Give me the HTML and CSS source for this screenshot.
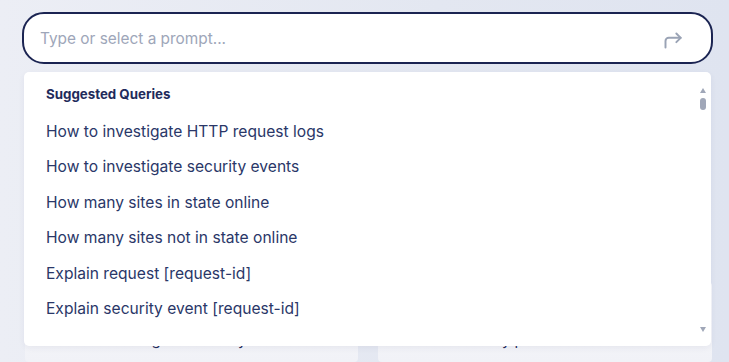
FILE: index.html
```html
<!DOCTYPE html>
<html lang="en">
<head>
  <meta charset="UTF-8" />
  <meta name="viewport" content="width=device-width, initial-scale=1" />
  <title>Assistant Prompt</title>
  <link rel="stylesheet" href="styles.css">
</head>
<body>

<div class="page">
  <div class="search">
    <input type="text" class="search-input" placeholder="Type or select a prompt..." />
    <button class="send-btn" aria-label="Send">
      <svg width="26" height="26" viewBox="0 0 24 24" fill="none" stroke="currentColor" stroke-width="1.8" stroke-linecap="round" stroke-linejoin="round">
        <path d="M6 19v-6a3 3 0 0 1 3 -3h11" />
        <path d="M16 6l4 4l-4 4" />
      </svg>
    </button>
  </div>

  <div class="panel">
    <div class="cards">
      <div class="card">
        <p class="card-title">Show recent large attacks by site</p>
      </div>
      <div class="card">
        <p class="card-title">Show attacks by path</p>
      </div>
    </div>

    <!-- Suggestions dropdown -->
    <div class="dropdown">
      <div class="dropdown-list">
        <h4 class="dropdown-title">Suggested Queries</h4>
        <ul class="queries">
          <li>How to investigate HTTP request logs</li>
          <li>How to investigate security events</li>
          <li>How many sites in state online</li>
          <li>How many sites not in state online</li>
          <li>Explain request [request-id]</li>
          <li>Explain security event [request-id]</li>
        </ul>
      </div>
      <div class="scrollbar">
        <span class="arrow-up"></span>
        <span class="thumb"></span>
        <span class="track"></span>
        <span class="arrow-down"></span>
      </div>
    </div>
  </div>
</div>

</body>
</html>
```

FILE: styles.css
```css
/* Page */
body {
  margin: 0;
  font-family: 'Inter', 'Noto Sans', sans-serif;
  background: linear-gradient(90deg, #eceef5, #e3e7f1 60%, #dfe4f0);
  height: 362px;
  overflow: hidden;
}

.page {
  padding: 12px 16px 0 22px;
}

/* Prompt input */
.search {
  display: flex;
  align-items: center;
  height: 52px;
  box-sizing: border-box;
  width: 691px;
  border: 2px solid #1b2452;
  border-radius: 22px;
  background: #ffffff;
  padding: 0 16px;
}

.search-input {
  flex: 1;
  border: none;
  outline: none;
  background: transparent;
  font-family: inherit;
  font-size: 15.4px;
  color: #1f2b5b;
  padding: 0;
}

.search-input::placeholder {
  color: #9ea6b9;
}

.send-btn {
  border: none;
  background: none;
  padding: 0;
  margin: 3px 10px 0 0;
  color: #9aa3b5;
  display: flex;
}

/* Dropdown + cards behind */
.panel {
  position: relative;
  margin-top: 8px;
}

.cards {
  display: grid;
  grid-template-columns: 333px 334px;
  gap: 20px;
  margin: 0 2px 0 3px;
  padding-top: 210px;
}

.card {
  background: linear-gradient(180deg, #f6f7fa, #f1f2f7);
  border-radius: 4px;
  height: 80px;
  padding: 48px 16px 0;
  box-sizing: border-box;
}

.card-title {
  margin: 0;
  font-size: 15px;
  line-height: 20px;
  color: #1f2b5b;
}

.dropdown {
  position: absolute;
  top: 0;
  left: 2px;
  width: 687px;
  height: 274px;
  display: flex;
  background: #ffffff;
  border-radius: 5px;
  box-shadow: 0 2px 6px rgba(30, 40, 90, 0.06);
}

.dropdown-list {
  flex: 1;
  padding: 14px 0 0 22px;
}

.dropdown-title {
  margin: 0 0 12px;
  font-size: 13.3px;
  line-height: 16px;
  font-weight: 700;
  color: #1f2b5b;
}

.queries {
  list-style: none;
  margin: 0;
  padding: 0;
}

.queries li {
  font-size: 15.6px;
  line-height: 19.4px;
  padding: 8px 0;
  color: #2a3768;
}

/* Fake scrollbar */
.scrollbar {
  width: 12px;
  display: flex;
  flex-direction: column;
  align-items: center;
  padding: 16px 2px 14px 0;
}

.arrow-up,
.arrow-down {
  width: 0;
  height: 0;
  border-left: 3.5px solid transparent;
  border-right: 3.5px solid transparent;
}

.arrow-up {
  border-bottom: 5px solid #a0a7b8;
}

.arrow-down {
  border-top: 5px solid #a0a7b8;
}

.thumb {
  width: 6px;
  height: 12px;
  margin-top: 5px;
  border-radius: 3px;
  background: #a0a7b8;
}

.track {
  flex: 1;
}
```
